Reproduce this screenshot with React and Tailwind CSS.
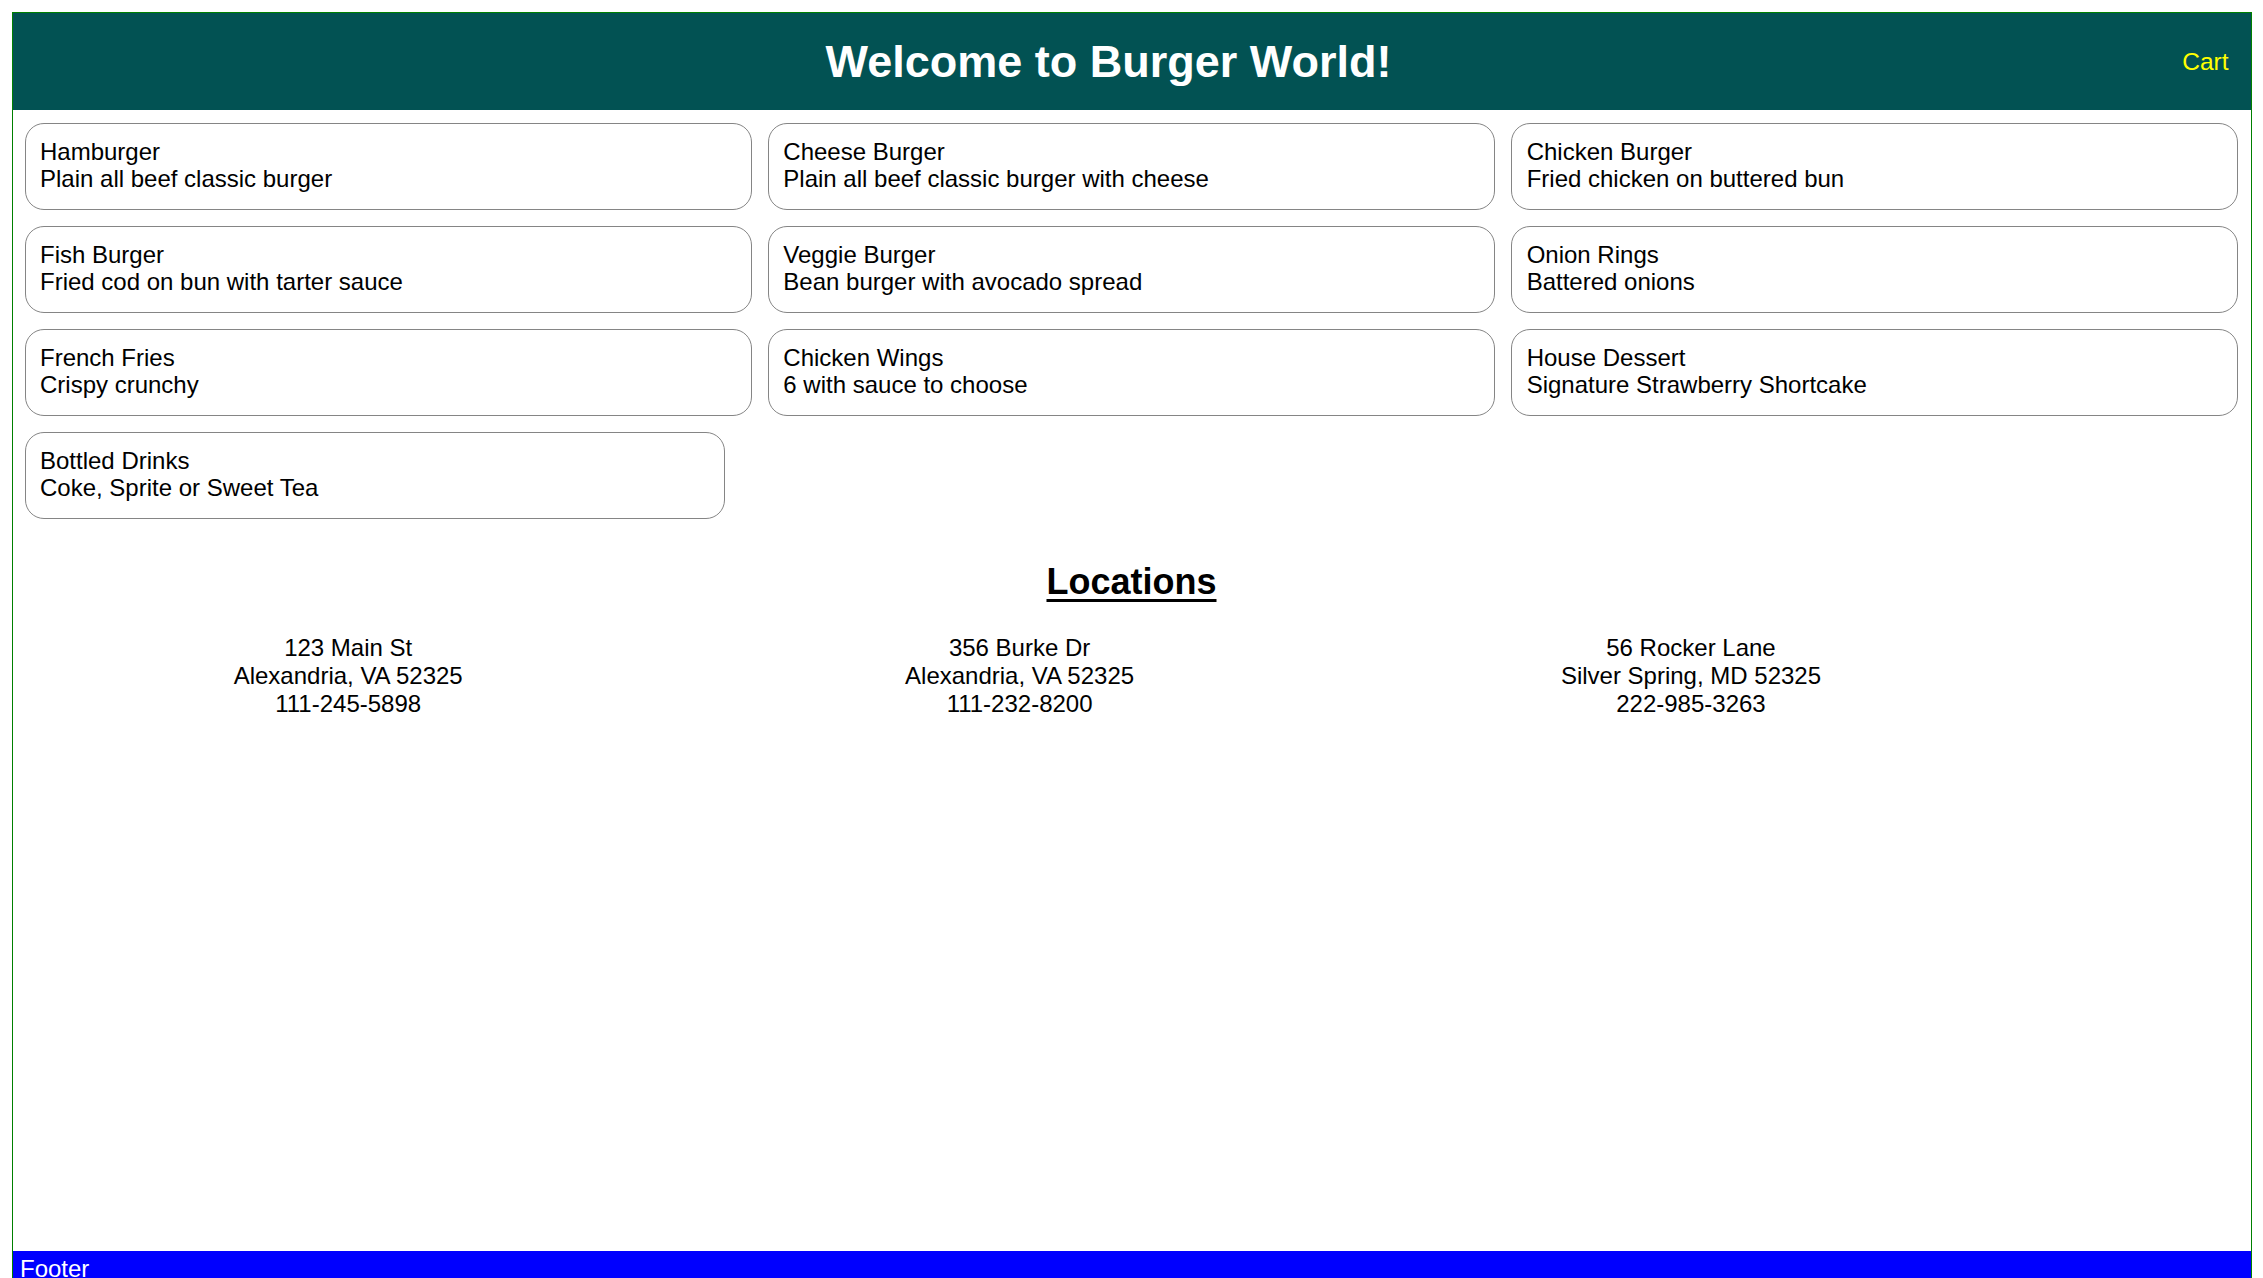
const menuItems = [
  { name: 'Hamburger', desc: 'Plain all beef classic burger' },
  { name: 'Cheese Burger', desc: 'Plain all beef classic burger with cheese' },
  { name: 'Chicken Burger', desc: 'Fried chicken on buttered bun' },
  { name: 'Fish Burger', desc: 'Fried cod on bun with tarter sauce' },
  { name: 'Veggie Burger', desc: 'Bean burger with avocado spread' },
  { name: 'Onion Rings', desc: 'Battered onions' },
  { name: 'French Fries', desc: 'Crispy crunchy' },
  { name: 'Chicken Wings', desc: '6 with sauce to choose' },
  { name: 'House Dessert', desc: 'Signature Strawberry Shortcake' },
];

const locations = [
  { street: '123 Main St', city: 'Alexandria, VA 52325', phone: '111-245-5898' },
  { street: '356 Burke Dr', city: 'Alexandria, VA 52325', phone: '111-232-8200' },
  { street: '56 Rocker Lane', city: 'Silver Spring, MD 52325', phone: '222-985-3263' },
];

const MenuCard = ({ item, className = '' }) => (
  <div className={`h-[87px] rounded-[19px] border border-[#858585] px-[14.5px] pt-[13.5px] ${className}`}>
    <div>{item.name}</div>
    <div>{item.desc}</div>
  </div>
);

const App = () => {
  return (
    <div className="bg-white p-[11.5px] text-[24px] leading-[27.6px] text-black font-['Liberation_Sans',Arial,sans-serif]">
      <div className="flex h-[1280px] flex-col border border-[#008000]">
        {/* Header */}
        <header className="flex h-[97.5px] items-center bg-[#025253] pl-[24px] pr-[22px]">
          <h1 className="flex-1 text-center text-[45px] font-bold leading-none text-white">
            Welcome to Burger World!
          </h1>
          <a className="mt-[2px] w-[48px] text-right text-[24.5px] text-[#ffff00]">Cart</a>
        </header>

        {/* Menu + locations */}
        <main className="flex-1 pt-[13px]">
          <div className="mx-[12px] grid grid-cols-3 gap-[16px]">
            {menuItems.map((item) => (
              <MenuCard key={item.name} item={item} />
            ))}
            <MenuCard
              item={{ name: 'Bottled Drinks', desc: 'Coke, Sprite or Sweet Tea' }}
              className="w-[700px]"
            />
          </div>

          <h2 className="mt-[42px] text-center text-[36px] font-bold leading-[41px] underline underline-offset-[5px]">
            Locations
          </h2>

          <div className="mt-[31.5px] flex">
            {locations.map((loc) => (
              <div key={loc.street} className="w-[30%] text-center leading-[28px]">
                <div>{loc.street}</div>
                <div>{loc.city}</div>
                <div>{loc.phone}</div>
              </div>
            ))}
          </div>
        </main>

        {/* Footer */}
        <footer className="h-[40px] bg-[#0000ff] px-[7.5px] pt-[4px] text-white">Footer</footer>
      </div>
    </div>
  );
};

export default App;
